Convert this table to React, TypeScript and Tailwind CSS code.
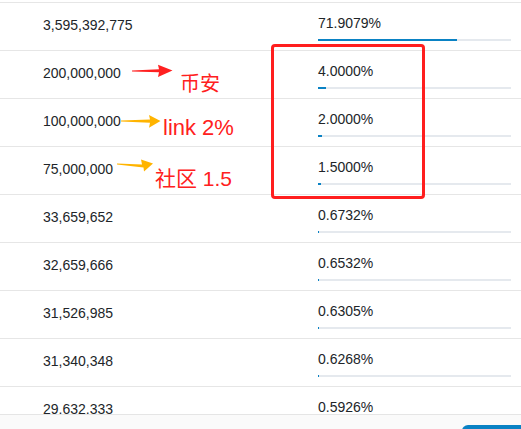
import React from 'react';

// ── Data ──────────────────────────────────────────────────────────────────────

const ROWS: { amount: string; pct: number }[] = [
  { amount: '3,595,392,775', pct: 71.9079 },
  { amount: '200,000,000', pct: 4.0 },
  { amount: '100,000,000', pct: 2.0 },
  { amount: '75,000,000', pct: 1.5 },
  { amount: '33,659,652', pct: 0.6732 },
  { amount: '32,659,666', pct: 0.6532 },
  { amount: '31,526,985', pct: 0.6305 },
  { amount: '31,340,348', pct: 0.6268 },
  { amount: '29,632,333', pct: 0.5926 },
];

// ── Hand-drawn annotation arrows ──────────────────────────────────────────────

function Arrows() {
  return (
    <svg className="pointer-events-none absolute inset-0" width={521} height={429} viewBox="0 0 521 429">
      {/* red -> 币安 */}
      <polygon
        fill="#ff2020"
        points="132,70.6 159,69.2 158,64.8 172.5,70.6 158,77 159,72.2 132,71.4"
      />
      {/* yellow -> link 2% */}
      <polygon
        fill="#ffb400"
        points="121,120.6 150,119.4 149,115 160.5,121 149,127.8 150,122.8 121,121.6"
      />
      {/* yellow -> 社区 1.5 */}
      <polygon
        fill="#ffb400"
        points="117,163.6 142,164.6 141,159.6 153,163.4 144,171.6 143.5,167.6 117,164.6"
      />
    </svg>
  );
}

export default function App() {
  return (
    <div className="relative h-[429px] w-[521px] overflow-hidden bg-white font-['Liberation_Sans','Noto_Sans_CJK_SC',sans-serif] text-[#212529]">
      {/* remnant of the row above */}
      <div className="h-[2px]" />

      {ROWS.map((r) => (
        <div key={r.amount} className="flex h-[48px] border-t border-[#e6e6e6]">
          <div className="flex w-[318px] items-center pb-[3px] pl-[43px] text-[14px]">{r.amount}</div>
          <div className="flex flex-1 flex-col justify-center pr-[10px]">
            <span className="text-[14px] leading-[20px]">{r.pct.toFixed(4)}%</span>
            <div className="mt-[6px] h-[2px] bg-[#e5e9ee]">
              <div className="h-full bg-[#0a82c4]" style={{ width: `${r.pct}%` }} />
            </div>
          </div>
        </div>
      ))}

      {/* red highlight box */}
      <div className="pointer-events-none absolute left-[271px] top-[44px] h-[155px] w-[154px] rounded-[4px] border-[3px] border-[#ff1e1e]" />

      <Arrows />

      <span className="absolute left-[180px] top-[74px] text-[20px] leading-none text-[#ff2020]">币安</span>
      <span className="absolute left-[163px] top-[117px] text-[22px] leading-none text-[#ff2020]">link 2%</span>
      <span className="absolute left-[155px] top-[168px] text-[21px] leading-none text-[#ff2020]">社区 1.5</span>

      {/* sticky footer */}
      <div className="absolute bottom-0 left-0 right-0 flex h-[15px] justify-end overflow-hidden border-t border-[#e5e5e5] bg-[#fafafa]">
        <div className="mt-[10px] h-[20px] w-[59px] rounded-tl-[6px] bg-[#0a82c4]" />
      </div>
    </div>
  );
}
